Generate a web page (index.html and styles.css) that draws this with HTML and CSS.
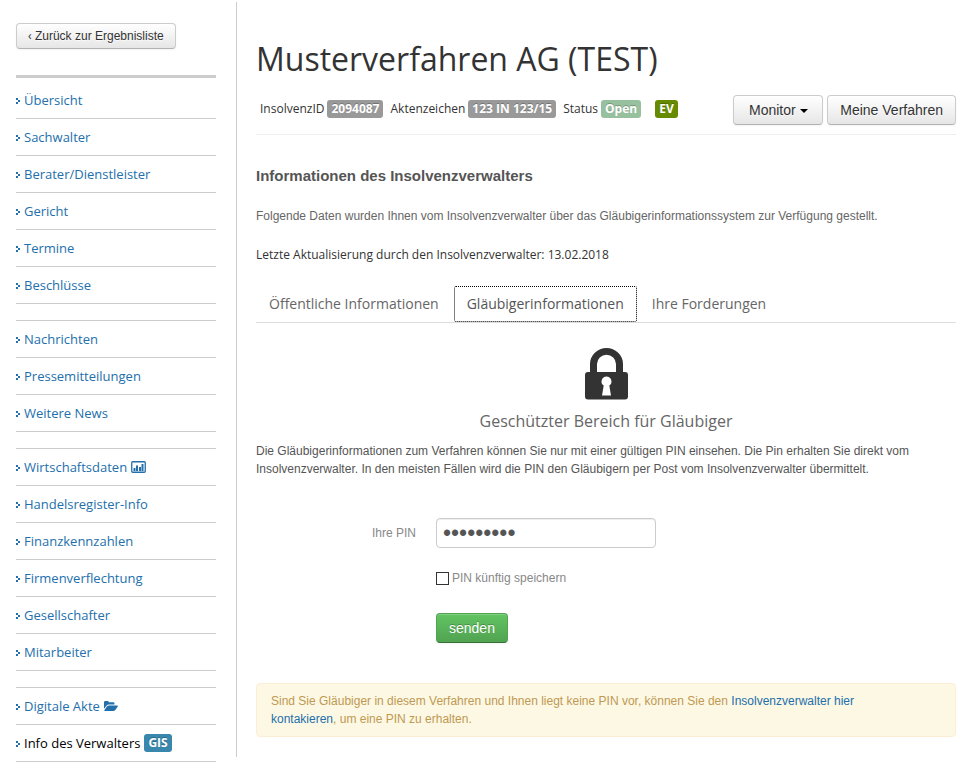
FILE: index.html
```html
<!DOCTYPE html>
<html lang="de">
<head>
<meta charset="utf-8">
<title>Musterverfahren AG (TEST)</title>
<link rel="stylesheet" href="styles.css">
</head>
<body>
<svg class="sprite" aria-hidden="true">
  <symbol id="arrow" viewBox="0 0 4 6"><path d="M0 0h2v2h-2zM2 2h2v2h-2zM0 4h2v2h-2z"/></symbol>
</svg>
<div class="page">
  <aside class="sidebar">
    <button class="btn btn-small" type="button"><span class="back-mark">‹</span> Zurück zur Ergebnisliste</button>
    <nav class="nav">
      <ul class="nav-group">
        <li><svg class="arrow"><use href="#arrow"/></svg><a href="#">Übersicht</a></li>
        <li><svg class="arrow"><use href="#arrow"/></svg><a href="#">Sachwalter</a></li>
        <li><svg class="arrow"><use href="#arrow"/></svg><a href="#">Berater/Dienstleister</a></li>
        <li><svg class="arrow"><use href="#arrow"/></svg><a href="#">Gericht</a></li>
        <li><svg class="arrow"><use href="#arrow"/></svg><a href="#">Termine</a></li>
        <li><svg class="arrow"><use href="#arrow"/></svg><a href="#">Beschlüsse</a></li>
      </ul>
      <ul class="nav-group">
        <li><svg class="arrow"><use href="#arrow"/></svg><a href="#">Nachrichten</a></li>
        <li><svg class="arrow"><use href="#arrow"/></svg><a href="#">Pressemitteilungen</a></li>
        <li><svg class="arrow"><use href="#arrow"/></svg><a href="#">Weitere News</a></li>
      </ul>
      <ul class="nav-group">
        <li><svg class="arrow"><use href="#arrow"/></svg><a href="#">Wirtschaftsdaten</a>
          <svg class="icon-chart" viewBox="0 0 15 12" aria-hidden="true"><rect x=".75" y=".75" width="13.5" height="10.5" rx="1" fill="none" stroke="currentColor" stroke-width="1.3"/><path fill="currentColor" d="M2.500 7h2v3h-2zM5 4.500h2V10H5zM8 6h2v4H8zM10.500 3h2v7h-2z"/></svg></li>
        <li><svg class="arrow"><use href="#arrow"/></svg><a href="#">Handelsregister-Info</a></li>
        <li><svg class="arrow"><use href="#arrow"/></svg><a href="#">Finanzkennzahlen</a></li>
        <li><svg class="arrow"><use href="#arrow"/></svg><a href="#">Firmenverflechtung</a></li>
        <li><svg class="arrow"><use href="#arrow"/></svg><a href="#">Gesellschafter</a></li>
        <li><svg class="arrow"><use href="#arrow"/></svg><a href="#">Mitarbeiter</a></li>
      </ul>
      <ul class="nav-group">
        <li><svg class="arrow"><use href="#arrow"/></svg><a href="#">Digitale Akte</a>
          <svg class="icon-folder" viewBox="0 0 14 10" aria-hidden="true"><path fill="currentColor" d="M0 7.800V1.300Q0 0 1.300 0h2.200Q4.800 0 4.800 1.300h4.400q1.300 0 1.300 1.300V3.600H5q-1.600 0-2.700 1.300zM.3 9.200l2.600-3.600q.9-1.100 2.100-1.100h8.300q1 0 .5.900l-2.500 3.500q-.8 1.100-2 1.100H1q-1.100 0-.7-.8z"/></svg></li>
        <li><svg class="arrow"><use href="#arrow"/></svg><a class="current" href="#">Info des Verwalters</a> <span class="badge badge-info">GIS</span></li>
      </ul>
    </nav>
  </aside>
  <main class="content">
    <h1>Musterverfahren AG (TEST)</h1>
    <div class="meta">
      <dl class="facts">
        <div><dt>InsolvenzID</dt><dd class="badge">2094087</dd></div>
        <div><dt>Aktenzeichen</dt><dd class="badge">123 IN 123/15</dd></div>
        <div><dt>Status</dt><dd class="badge badge-open">Open</dd></div>
      </dl>
      <span class="badge badge-ev">EV</span>
      <div class="actions">
        <button class="btn" type="button">Monitor <span class="caret"></span></button>
        <button class="btn" type="button">Meine Verfahren</button>
      </div>
    </div>
    <h2>Informationen des Insolvenzverwalters</h2>
    <p class="intro">Folgende Daten wurden Ihnen vom Insolvenzverwalter über das Gläubigerinformationssystem zur Verfügung gestellt.</p>
    <p class="updated">Letzte Aktualisierung durch den Insolvenzverwalter: 13.02.2018</p>
    <nav class="tabs">
      <a href="#">Öffentliche Informationen</a>
      <a class="active" href="#">Gläubigerinformationen</a>
      <a href="#">Ihre Forderungen</a>
    </nav>
    <section class="locked">
      <svg class="icon-lock" viewBox="0 0 43 52" aria-hidden="true"><path fill="#333" fill-rule="evenodd" d="M5 24V16a16.500 16 0 0 1 33 0v8h2q3 0 3 3v21.500q0 3-3 3H3q-3 0-3-3V27q0-3 3-3zM12 24h19v-8a9.500 9.200 0 0 0-19 0zM21.500 28.500a5 5 0 0 0-2.800 9.100L17 47.500h9l-1.700-9.900a5 5 0 0 0-2.800-9.100z"/></svg>
      <h3>Geschützter Bereich für Gläubiger</h3>
      <p>Die Gläubigerinformationen zum Verfahren können Sie nur mit einer gültigen PIN einsehen. Die Pin erhalten Sie direkt vom Insolvenzverwalter. In den meisten Fällen wird die PIN den Gläubigern per Post vom Insolvenzverwalter übermittelt.</p>
    </section>
    <form class="pin-form">
      <label class="pin-label" for="pin">Ihre PIN</label>
      <input class="pin-input" id="pin" type="password" value="123456789">
      <label class="remember"><input type="checkbox"> PIN künftig speichern</label>
      <button class="btn btn-success" type="button">senden</button>
    </form>
    <div class="notice">Sind Sie Gläubiger in diesem Verfahren und Ihnen liegt keine PIN vor, können Sie den <a href="#">Insolvenzverwalter hier kontakieren</a>, um eine PIN zu erhalten.</div>
  </main>
</div>
</body>
</html>
```
FILE: styles.css
```css
* { box-sizing: border-box; }
body {
  margin: 0;
  background: #fff;
  color: #333;
  font: 12px/18px "Liberation Sans", Arial, sans-serif;
}
h1, h2, h3, p, ul, dl, dd { margin: 0; padding: 0; }
a { color: #236fac; text-decoration: none; }
.sprite { display: none; }

.page {
  display: grid;
  grid-template-columns: 200px 1fr;
  column-gap: 20px;
  align-items: start;
  padding: 2px 1px 8px 16px;
}
.sidebar { padding-top: 21px; }
.content {
  border-left: 1px solid #ccc;
  padding: 35px 0 20px 19px;
  min-width: 0;
}

.btn {
  height: 30px;
  padding: 0 12px;
  border: 1px solid #ccc;
  border-bottom-color: #b3b3b3;
  border-radius: 4px;
  background: linear-gradient(#fff, #e6e6e6);
  box-shadow: inset 0 1px 0 rgba(255, 255, 255, .2), 0 1px 2px rgba(0, 0, 0, .05);
  color: #333;
  font: 14px/20px "Liberation Sans", Arial, sans-serif;
  text-shadow: 0 1px 1px rgba(255, 255, 255, .75);
  white-space: nowrap;
}
.btn-small {
  display: block;
  height: 26px;
  padding: 0 11px;
  font-size: 12px;
}
.back-mark { font-family: "Open Sans", sans-serif; }
.btn-success {
  border-color: #51a351 #51a351 #387038;
  background: linear-gradient(#62c462, #51a351);
  color: #fff;
  text-shadow: 0 -1px 0 rgba(0, 0, 0, .25);
}
.caret {
  display: inline-block;
  border: 4px solid transparent;
  border-top-color: #000;
  border-bottom: 0;
  vertical-align: middle;
}

.nav {
  margin-top: 26px;
  padding-top: 4px;
  border-top: 3px solid #ccc;
  font: 13px/18px "Open Sans", sans-serif;
}
.nav-group { list-style: none; }
.nav-group + .nav-group {
  margin-top: 16px;
  border-top: 1px solid #ccc;
}
.nav-group li {
  display: flex;
  align-items: center;
  gap: 4px;
  height: 37px;
  border-bottom: 1px solid #ccc;
  color: #236fac;
}
.arrow { width: 4px; height: 6px; margin-top: 2px; fill: #236fac; shape-rendering: crispEdges; }
.current { color: #000; }
.icon-chart { width: 15px; height: 12px; }
.icon-folder { width: 14px; height: 10px; }

.badge {
  display: inline-block;
  padding: 0 4px;
  border-radius: 3px;
  background: #999;
  color: #fff;
  font: bold 12px/18px "Open Sans", sans-serif;
  text-shadow: 0 -1px 0 rgba(0, 0, 0, .25);
}
.badge-info { background: #3a87ad; }
.badge-open { background: #97c09f; }
.badge-ev { background: #678b00; margin-left: 14px; }

h1 { font: 32px/44px "Open Sans", sans-serif; }
.meta {
  display: flex;
  align-items: center;
  margin-top: 9px;
  padding: 5px 0 9px;
  border-bottom: 1px solid #eee;
}
.facts { display: flex; gap: 7px; padding-left: 4px; font: 12px/18px "Open Sans", sans-serif; margin-bottom: 2px; }
.facts > div { display: flex; gap: 3px; }
.meta > .badge { margin-bottom: 2px; }
.actions { display: flex; gap: 4px; margin-left: auto; }
.actions .btn { min-width: 90px; }

h2 { margin-top: 32px; color: #555; font-size: 15px; line-height: 18px; }
.intro { margin-top: 22px; color: #666; }
.updated { margin-top: 21px; font: 12px/18px "Open Sans", sans-serif; }

.tabs {
  display: flex;
  gap: 2px;
  margin-top: 22px;
  border-bottom: 1px solid #ddd;
  font: 14px/20px "Open Sans", sans-serif;
}
.tabs a {
  padding: 7px 12px;
  border: 1px solid transparent;
  color: #666;
}
.tabs .active { border: 1px dotted #000; background: #fff; color: #555; border-radius: 2px; }

.locked { margin-top: 25px; color: #555; }
.icon-lock { display: block; width: 43px; height: 52px; margin: 0 auto; }
.locked h3 { margin-top: 9px; color: #666; font: 16px/24px "Open Sans", sans-serif; text-align: center; }
.locked p { margin-top: 9px; }

.pin-form {
  display: grid;
  grid-template-columns: 160px 220px;
  column-gap: 20px;
  justify-items: start;
  margin-top: 40px;
  color: #888;
}
.pin-label { justify-self: end; line-height: 30px; }
.pin-input {
  width: 100%;
  height: 30px;
  padding: 0 6px;
  border: 1px solid #ccc;
  border-radius: 4px;
  background: #fff;
  box-shadow: inset 0 1px 1px rgba(0, 0, 0, .075);
  color: #555;
  font: 23px/28px "Liberation Sans", Arial, sans-serif;
}
.remember {
  grid-column: 2;
  display: flex;
  align-items: center;
  gap: 3px;
  margin-top: 21px;
}
.remember input {
  appearance: none;
  width: 13px;
  height: 13px;
  margin: 1px 0 0;
  border: 1px solid #333;
  background: #fff;
}
.pin-form .btn-success { grid-column: 2; margin-top: 26px; }

.notice {
  margin-top: 40px;
  padding: 8px 35px 8px 14px;
  border: 1px solid #fbeed5;
  border-radius: 4px;
  background: #fcf8e3;
  color: #c09853;
}
```
